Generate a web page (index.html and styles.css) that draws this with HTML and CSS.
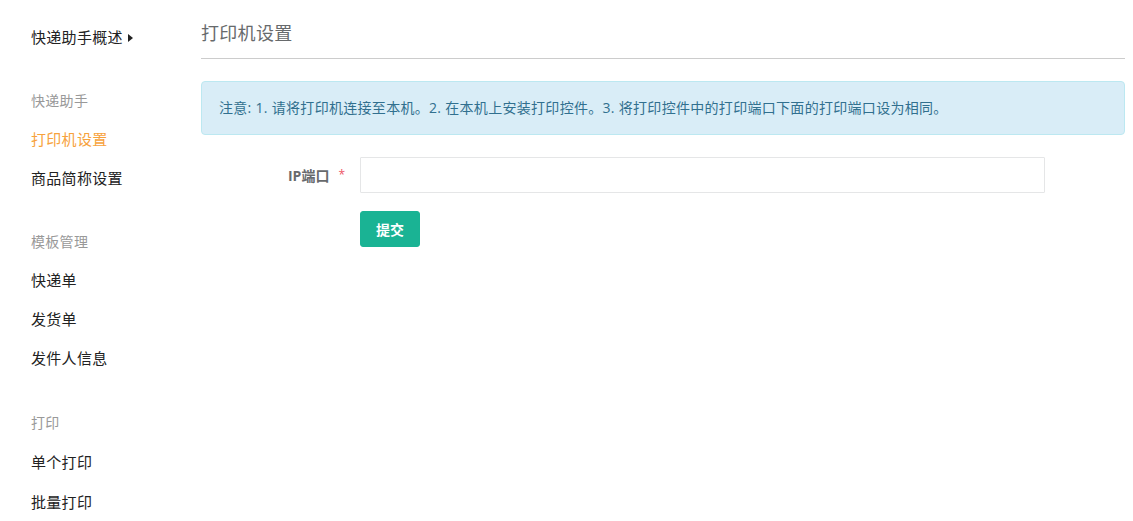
FILE: index.html
```html
<!DOCTYPE html>
<html lang="zh-CN">
<head>
<meta charset="utf-8">
<title>打印机设置</title>
<link rel="stylesheet" href="styles.css">
</head>
<body>
<div class="page">
  <aside class="sidebar">
    <div class="row overview">快递助手概述<span class="caret"></span></div>
    <div class="group">
      <div class="row head">快递助手</div>
      <div class="row item active">打印机设置</div>
      <div class="row item">商品简称设置</div>
    </div>
    <div class="group">
      <div class="row head">模板管理</div>
      <div class="row item">快递单</div>
      <div class="row item">发货单</div>
      <div class="row item">发件人信息</div>
    </div>
    <div class="group last">
      <div class="row head">打印</div>
      <div class="row item">单个打印</div>
      <div class="row item">批量打印</div>
    </div>
  </aside>
  <main class="main">
    <h1 class="title">打印机设置</h1>
    <div class="alert">注意: 1. 请将打印机连接至本机。2. 在本机上安装打印控件。3. 将打印控件中的打印端口下面的打印端口设为相同。</div>
    <div class="form-row first">
      <label class="label">IP端口<span class="star">*</span></label>
      <input class="input" type="text">
    </div>
    <div class="form-row">
      <span class="label"></span>
      <button class="btn" type="button">提交</button>
    </div>
  </main>
</div>
</body>
</html>
```

FILE: styles.css
```css
html, body {
  margin: 0;
  padding: 0;
  background: #fff;
}
body {
  font-family: "Open Sans", "Noto Sans CJK SC", sans-serif;
  font-size: 14px;
  color: #333;
}
.page {
  display: flex;
  align-items: flex-start;
}
.sidebar {
  width: 170px;
  flex: 0 0 170px;
  padding: 18px 0 0 31px;
}
.row {
  height: 39px;
  line-height: 39px;
  white-space: nowrap;
  letter-spacing: 0.3px;
}
.overview {
  font-size: 15px;
  color: #222;
  display: flex;
  align-items: center;
}
.caret {
  display: inline-block;
  width: 0;
  height: 0;
  margin-left: 5px;
  border-top: 4px solid transparent;
  border-bottom: 4px solid transparent;
  border-left: 5px solid #222;
}
.group {
  margin-top: 24px;
}
.group.last {
  margin-top: 25px;
}
.group.last .item {
  height: 40px;
  line-height: 40px;
}
.head {
  font-size: 14px;
  color: #999;
}
.item {
  font-size: 15px;
  color: #222;
}
.item.active {
  color: #f7a23c;
}
.main {
  flex: 1;
  padding-right: 8px;
}
.title {
  margin: 0;
  padding: 21px 0 0;
  height: 37px;
  line-height: 24px;
  font-size: 18px;
  font-weight: normal;
  color: #676a6c;
  border-bottom: 1px solid #ccc;
  letter-spacing: 0.3px;
}
.alert {
  margin-top: 22px;
  height: 52px;
  line-height: 52px;
  padding: 0 17px;
  background: #d9edf7;
  border: 1px solid #bce8f1;
  border-radius: 4px;
  color: #31708f;
  font-size: 14px;
  white-space: nowrap;
  letter-spacing: 0.3px;
}
.form-row {
  display: flex;
  align-items: center;
}
.form-row.first {
  margin-top: 22px;
}
.form-row + .form-row {
  margin-top: 18px;
}
.label {
  width: 144px;
  flex: 0 0 144px;
  padding-right: 15px;
  text-align: right;
  font-weight: bold;
  color: #676a6c;
  font-size: 14px;
}
.star {
  color: #ed5565;
  font-weight: normal;
  font-size: 12px;
  margin-left: 9px;
  position: relative;
  top: -2px;
}
.input {
  width: 685px;
  height: 36px;
  box-sizing: border-box;
  border: 1px solid #e5e6e7;
  border-radius: 1px;
  padding: 6px 12px;
  margin: 0;
  font-size: 14px;
}
.btn {
  width: 60px;
  height: 36px;
  padding: 0;
  margin: 0;
  border: 1px solid #1ab394;
  border-radius: 3px;
  background: #1ab394;
  color: #fff;
  font-family: "Open Sans", "Noto Sans CJK SC", sans-serif;
  font-size: 14px;
  font-weight: bold;
}
```
